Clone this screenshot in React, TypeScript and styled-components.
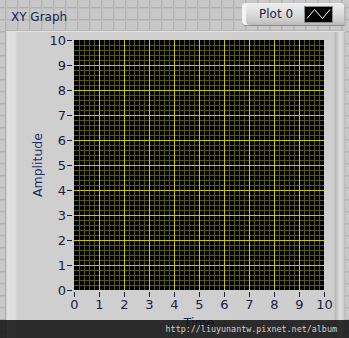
import React from 'react';
import styled, { createGlobalStyle } from 'styled-components';

const Global = createGlobalStyle`
  html, body { margin: 0; padding: 0; }
  body {
    width: 349px;
    height: 338px;
    overflow: hidden;
    background-color: #c8c8c8;
    background-image:
      repeating-linear-gradient(to right, transparent 0 5px, #b2b2b2 5px 6px, #bfbfbf 6px 7px, transparent 7px 12px),
      repeating-linear-gradient(to bottom, transparent 0 7px, #b2b2b2 7px 8px, #bfbfbf 8px 9px, transparent 9px 12px);
    font-family: "DejaVu Sans", Verdana, sans-serif;
  }
`;

const Frame = styled.div`
  position: relative;
  width: 349px;
  height: 338px;
  overflow: hidden;
  display: flex;
  flex-direction: column;
`;

const Header = styled.div`
  display: flex;
  align-items: flex-start;
  height: 31px;
  flex: none;
`;

const Caption = styled.div`
  padding: 10px 0 0 11px;
  font-size: 12px;
  line-height: 15px;
  color: #16224e;
  white-space: nowrap;
`;

const Legend = styled.div`
  margin: 3px 3px 0 auto;
  width: 104px;
  height: 22px;
  box-sizing: border-box;
  display: flex;
  align-items: center;
  padding-left: 17px;
  gap: 11px;
  border-radius: 4px 3px 3px 4px;
  background: linear-gradient(to bottom, #efefef 0%, #dedede 45%, #cbcbcb 80%, #b9b9b9 100%);
  box-shadow: inset 4px 0 0 #f3f3f3, inset -2px 0 0 #b8b8b8, 0 1px 0 #8e8e8e;
`;

const LegendText = styled.span`
  font-size: 12px;
  line-height: 15px;
  color: #16224e;
  white-space: nowrap;
`;

const Swatch = styled.svg`
  display: block;
  flex: none;
  width: 29px;
  height: 17px;
  margin-top: 1px;
`;

const Panel = styled.div`
  margin-left: 6px;
  width: 339px;
  flex: 1;
  box-sizing: border-box;
  padding-top: 9px;
  display: flex;
  flex-direction: column;
  background: linear-gradient(
    to right,
    #bcbcbc 0px,
    #e0e0e0 1px,
    #dedede 9px,
    #cfcfcf 11px,
    #cecece 328px,
    #b6b6b6 329px,
    #c6c6c6 331px,
    #e2e2e2 334px,
    #cdcdcd 338px,
    #a9a9a9 339px
  );
  box-shadow: inset 0 1px 0 #e4e4e4, 0 -1px 0 #b4b4b4;
`;

const PlotRow = styled.div`
  display: flex;
  height: 250px;
  flex: none;
`;

const YTitle = styled.div`
  margin-left: 24px;
  width: 15px;
  align-self: center;
  writing-mode: vertical-rl;
  transform: rotate(180deg);
  font-size: 12.5px;
  line-height: 15px;
  color: #1a2d66;
  white-space: nowrap;
`;

const YAxis = styled.div`
  width: 29px;
  height: 250px;
  flex: none;
`;

const YTickList = styled.div`
  margin-top: -12px;
  display: flex;
  flex-direction: column;
`;

const YTick = styled.div`
  height: 25px;
  display: flex;
  align-items: center;
  justify-content: flex-end;
  font-size: 13px;
  line-height: 15px;
  color: #18203f;
`;

const HMark = styled.span`
  width: 5px;
  height: 1px;
  margin: 0 2px 0 1px;
  background: #18203f;
`;

const PlotSvg = styled.svg`
  display: block;
  flex: none;
  width: 250px;
  height: 250px;
`;

const XAxis = styled.div`
  display: flex;
  margin-left: 56px;
  padding-top: 2px;
  flex: none;
`;

const XTick = styled.div`
  width: 25px;
  flex: none;
  display: flex;
  flex-direction: column;
  align-items: center;
  font-size: 13px;
  line-height: 15px;
  color: #18203f;
`;

const VMark = styled.span`
  width: 1px;
  height: 5px;
  background: #18203f;
`;

const XTitle = styled.div`
  margin: 3px 0 0 68px;
  width: 250px;
  text-align: center;
  font-size: 12.5px;
  line-height: 15px;
  color: #1a2d66;
`;

const Watermark = styled.div`
  position: absolute;
  left: 0;
  right: 0;
  bottom: 0;
  height: 18px;
  display: flex;
  align-items: center;
  justify-content: flex-end;
  padding-right: 12px;
  background: rgba(16, 16, 16, 0.86);
  font-family: "DejaVu Sans Mono", "Liberation Mono", monospace;
  font-size: 8.4px;
  color: #d2d2d2;
  white-space: nowrap;
`;

const values = Array.from({ length: 11 }, (_, i) => i);

function Grid() {
  const minor: number[] = [];
  const major: number[] = [];
  for (let p = 5; p < 250; p += 5) {
    if (p % 25 === 0) major.push(p);
    else minor.push(p);
  }
  return (
    <PlotSvg viewBox="0 0 250 250" shapeRendering="crispEdges">
      <rect x="0" y="0" width="250" height="250" fill="#000" />
      {minor.map((p) => (
        <g key={`m${p}`} stroke="#56560c" strokeWidth="1">
          <line x1={p + 0.5} y1="0" x2={p + 0.5} y2="250" />
          <line x1="0" y1={p + 0.5} x2="250" y2={p + 0.5} />
        </g>
      ))}
      {major.map((p) => (
        <g key={`M${p}`} stroke="#c8c800" strokeWidth="1">
          <line x1={p + 0.5} y1="0" x2={p + 0.5} y2="250" />
          <line x1="0" y1={p + 0.5} x2="250" y2={p + 0.5} />
        </g>
      ))}
    </PlotSvg>
  );
}

export default function App() {
  return (
    <Frame>
      <Global />
      <Header>
        <Caption>XY Graph</Caption>
        <Legend>
          <LegendText>Plot 0</LegendText>
          <Swatch viewBox="0 0 29 17">
            <rect x="0.5" y="0.5" width="28" height="16" fill="#000" stroke="#8c8c8c" />
            <polyline
              points="3,12.5 10.5,3.5 18.5,12.5 26,3.5"
              fill="none"
              stroke="#fff"
              strokeWidth="1"
            />
          </Swatch>
        </Legend>
      </Header>
      <Panel>
        <PlotRow>
          <YTitle>Amplitude</YTitle>
          <YAxis>
            <YTickList>
              {values
                .slice()
                .reverse()
                .map((v) => (
                  <YTick key={v}>
                    {v}
                    <HMark />
                  </YTick>
                ))}
            </YTickList>
          </YAxis>
          <Grid />
        </PlotRow>
        <XAxis>
          {values.map((v) => (
            <XTick key={v}>
              <VMark />
              {v}
            </XTick>
          ))}
        </XAxis>
        <XTitle>Time</XTitle>
      </Panel>
      <Watermark>http://liuyunantw.pixnet.net/album</Watermark>
    </Frame>
  );
}
